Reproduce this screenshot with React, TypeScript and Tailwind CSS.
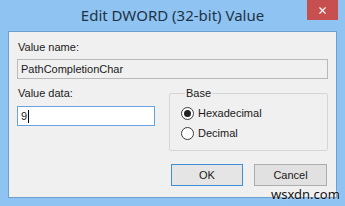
import { X } from "lucide-react";

const titleFont = { fontFamily: '"Noto Sans", "Open Sans", sans-serif' };
const bodyFont = { fontFamily: '"Liberation Sans", Arial, sans-serif' };

const Radio = ({ label, checked }: { label: string; checked?: boolean }) => (
  <label className="flex items-center h-[20px] gap-[4px] text-[11px] text-[#1a1a1a]">
    <span className="w-[13px] h-[13px] rounded-full border border-[#3b3b3b] bg-white flex items-center justify-center">
      {checked && <span className="w-[7px] h-[7px] rounded-full bg-[#222]" />}
    </span>
    {label}
  </label>
);

export default function App() {
  return (
    <div
      className="w-[345px] h-[206px] bg-[#8ec3f2] flex flex-col relative overflow-hidden"
      style={titleFont}
    >
      {/* title bar */}
      <div className="h-[31px] relative flex items-center justify-center">
        <span className="text-[15px] text-[#1f3347] leading-none -mt-[1px]">
          Edit DWORD (32-bit) Value
        </span>
        <button className="absolute top-0 left-[307px] w-[31px] h-[20px] bg-[#c74f4f] flex items-center justify-center">
          <X size={11} strokeWidth={2.5} className="text-white" />
        </button>
      </div>

      {/* client area */}
      <div
        className="mx-[8px] h-[167px] border border-[#6f9fcf] bg-[#f0f0f0] px-[8px] pt-[8px] text-[11px] text-[#1a1a1a]"
        style={bodyFont}
      >
        <div className="leading-[15px] pl-[1px]">Value name:</div>
        <div className="mt-[4px] h-[20px] border border-[#b9b9b9] bg-[#f0f0f0] flex items-center pl-[3px] leading-none">
          PathCompletionChar
        </div>

        <div className="mt-[7px] flex gap-[14px]">
          <div className="w-[138px]">
            <div className="leading-[15px] pl-[1px]">Value data:</div>
            <div className="mt-[5px] h-[20px] border border-[#6aa4dc] bg-white flex items-center pl-[3px] leading-none">
              9<span className="w-px h-[13px] bg-black ml-[1px]" />
            </div>
          </div>
          <fieldset className="flex-1 h-[65px] border border-[#d5d5d5] rounded-[2px] px-[11px] pt-[2px]">
            <legend className="leading-[15px] px-[1px] ml-[4px]">Base</legend>
            <Radio label="Hexadecimal" checked />
            <Radio label="Decimal" />
          </fieldset>
        </div>

        <div className="mt-[13px] flex justify-end gap-[11px] pr-[1px]">
          <button className="w-[72px] h-[22px] border border-[#3d8fd8] bg-[#e5e5e5] text-[11px] leading-none">
            OK
          </button>
          <button className="w-[73px] h-[22px] border border-[#adadad] bg-[#e1e1e1] text-[11px] leading-none">
            Cancel
          </button>
        </div>
      </div>

      <span className="absolute left-[271px] top-[187px] text-[13px] leading-[14px] text-[#111] [text-shadow:0_0_2px_#fff]">
        wsxdn.com
      </span>
    </div>
  );
}
